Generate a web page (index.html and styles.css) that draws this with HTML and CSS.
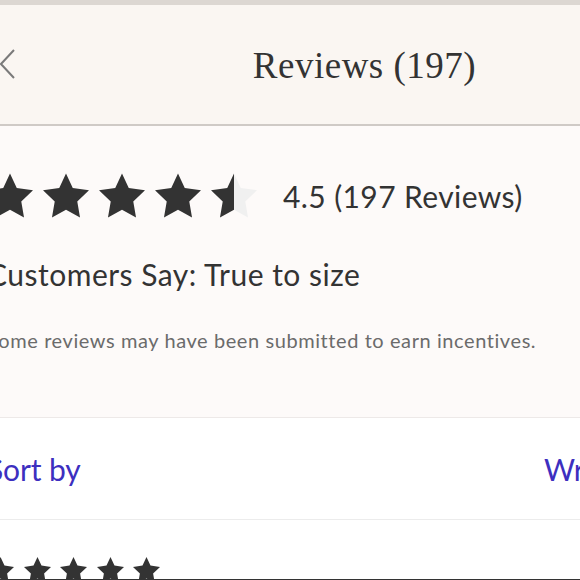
FILE: index.html
```html
<!DOCTYPE html>
<html lang="en">
<head>
<meta charset="utf-8">
<title>Reviews (197)</title>
<link rel="stylesheet" href="styles.css">
</head>
<body>
<svg class="defs" width="0" height="0" aria-hidden="true">
  <defs>
    <symbol id="star" viewBox="2 2 20 19.1">
      <path d="M12 2l2.94 6.26L22 9.27l-5.1 4.87 1.2 6.96L12 17.77l-6.1 3.33 1.2-6.96L2 9.27l7.06-1.01L12 2z"/>
    </symbol>
    <linearGradient id="half" x1="0" x2="1" y1="0" y2="0">
      <stop offset="50%" stop-color="#333333"/>
      <stop offset="50%" stop-color="#f0f0f0"/>
    </linearGradient>
  </defs>
</svg>
<div class="topbar"></div>
<div class="page">
  <header class="header">
    <button class="back" aria-label="Back">
      <svg width="16" height="32" viewBox="0 0 16 32"><path d="M14 1 L1 15 L14 29" fill="none" stroke="#7a7a7a" stroke-width="2"/></svg>
    </button>
    <h1 class="title">Reviews (197)</h1>
    <span></span>
  </header>
  <section class="summary">
    <div class="rating-row">
      <div class="stars big">
        <svg class="star"><use href="#star"/></svg>
        <svg class="star"><use href="#star"/></svg>
        <svg class="star"><use href="#star"/></svg>
        <svg class="star"><use href="#star"/></svg>
        <svg class="star half"><use href="#star"/></svg>
      </div>
      <span class="rating-text">4.5 (197 Reviews)</span>
    </div>
    <p class="customers">Customers Say: True to size</p>
    <p class="disclaimer">Some reviews may have been submitted to earn incentives.</p>
  </section>
  <div class="sort-row">
    <a class="link">Sort by</a>
    <a class="link">Write a review</a>
  </div>
  <section class="review">
    <div class="stars small">
      <svg class="star"><use href="#star"/></svg>
      <svg class="star"><use href="#star"/></svg>
      <svg class="star"><use href="#star"/></svg>
      <svg class="star"><use href="#star"/></svg>
      <svg class="star"><use href="#star"/></svg>
    </div>
  </section>
</div>
<div class="bottom-line"></div>
</body>
</html>
```
FILE: styles.css
```css
html, body {
  margin: 0;
  padding: 0;
}
body {
  background: #ffffff;
  overflow: hidden;
  font-family: "Lato", "Liberation Sans", sans-serif;
  color: #333333;
}
.defs {
  position: absolute;
  width: 0;
  height: 0;
}
.topbar {
  height: 5px;
  background: #dcd7d2;
}
.page {
  margin-left: -13px;
  width: 755px;
}
.header {
  height: 119px;
  background: #faf6f2;
  border-bottom: 2px solid #cfcac6;
  display: grid;
  grid-template-columns: 1fr auto 1fr;
  align-items: center;
}
.back {
  border: 0;
  background: none;
  padding: 0 0 0 13px;
  margin: 0;
  height: 32px;
  width: 40px;
  display: flex;
  align-items: center;
  justify-self: start;
}
.back svg {
  display: block;
}
.title {
  margin: 0;
  font-family: "Liberation Serif", serif;
  font-weight: 400;
  font-size: 37px;
  letter-spacing: 0.5px;
  color: #333333;
  padding-top: 2px;
}
.summary {
  background: #fdfaf9;
  border-bottom: 1px solid #ede9e8;
  padding: 47px 0 0 0;
  height: 244px;
}
.rating-row {
  display: flex;
  align-items: center;
}
.stars {
  display: flex;
}
.stars.big {
  gap: 10px;
}
.stars.big .star {
  width: 46px;
  height: 45px;
  fill: #333333;
}
.stars.big .star.half {
  fill: url(#half);
}
.rating-text {
  margin-left: 26px;
  font-size: 30px;
  letter-spacing: 0.4px;
  line-height: 36px;
}
.customers {
  margin: 38px 0 0 0;
  font-size: 30px;
  line-height: 36px;
  letter-spacing: 0.5px;
}
.disclaimer {
  margin: 36px 0 0 0;
  font-size: 20px;
  line-height: 24px;
  letter-spacing: 0.58px;
  color: #6b6b6b;
}
.sort-row {
  height: 101px;
  border-bottom: 1px solid #ececec;
  display: flex;
  align-items: center;
  justify-content: space-between;
  padding-right: 7px;
}
.link {
  font-size: 30px;
  color: #3d2fbf;
  letter-spacing: -0.1px;
}
.review {
  padding-top: 37px;
}
.stars.small {
  gap: 9.5px;
}
.stars.small .star {
  width: 27px;
  height: 26px;
  fill: #333333;
}
.bottom-line {
  position: fixed;
  left: 0;
  right: 0;
  bottom: 0;
  height: 1px;
  background: #333333;
}
```
